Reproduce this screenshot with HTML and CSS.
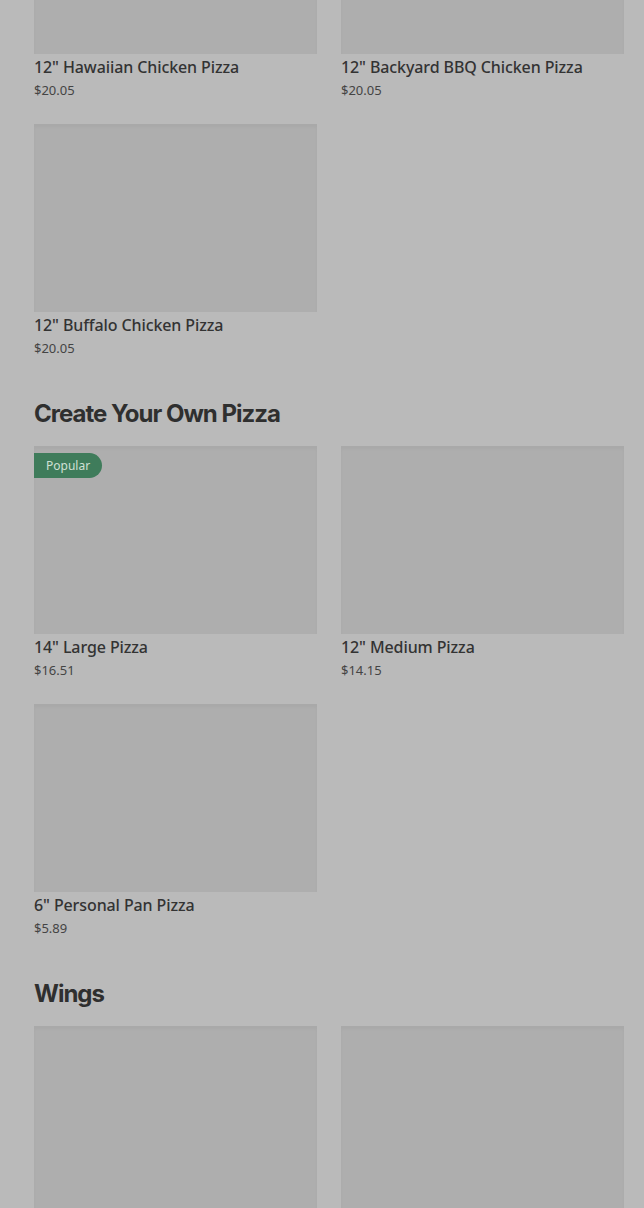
FILE: index.html
```html
<!DOCTYPE html>
<html lang="en">
<head>
    <meta charset="UTF-8">
    <meta name="viewport" content="width=device-width, initial-scale=1.0">
    <title>Menu</title>
    <link rel="stylesheet" href="styles.css">
</head>
<body>
    <main class="menu">
        <section class="menu-section">
            <div class="item-grid">
                <div class="item-card">
                    <div class="item-media"></div>
                    <div class="item-title">12" Hawaiian Chicken Pizza</div>
                    <div class="item-price">$20.05</div>
                </div>
                <div class="item-card">
                    <div class="item-media"></div>
                    <div class="item-title">12" Backyard BBQ Chicken Pizza</div>
                    <div class="item-price">$20.05</div>
                </div>
                <div class="item-card">
                    <div class="item-media"></div>
                    <div class="item-title">12" Buffalo Chicken Pizza</div>
                    <div class="item-price">$20.05</div>
                </div>
            </div>
        </section>

        <section class="menu-section">
            <h2 class="section-title">Create Your Own Pizza</h2>
            <div class="item-grid">
                <div class="item-card">
                    <div class="item-media">
                        <span class="item-badge">Popular</span>
                    </div>
                    <div class="item-title">14" Large Pizza</div>
                    <div class="item-price">$16.51</div>
                </div>
                <div class="item-card">
                    <div class="item-media"></div>
                    <div class="item-title">12" Medium Pizza</div>
                    <div class="item-price">$14.15</div>
                </div>
                <div class="item-card">
                    <div class="item-media"></div>
                    <div class="item-title">6" Personal Pan Pizza</div>
                    <div class="item-price">$5.89</div>
                </div>
            </div>
        </section>

        <section class="menu-section">
            <h2 class="section-title">Wings</h2>
            <div class="item-grid">
                <div class="item-card">
                    <div class="item-media"></div>
                </div>
                <div class="item-card">
                    <div class="item-media"></div>
                </div>
            </div>
        </section>
    </main>
</body>
</html>
```

FILE: styles.css
```css
:root {
    --page-bg: #bababa;
    --media-bg: #aeaeae;
    --text: #333333;
    --text-muted: #444444;
    --badge-bg: #3f7c5b;
    --badge-text: #cfe0d5;
}

body {
    margin: 0;
    background: var(--page-bg);
    font-family: "Noto Sans", sans-serif;
    color: var(--text);
    overflow: hidden;
}

/* page is shown scrolled part way down */
.menu {
    margin-top: -134px;
    padding: 0 20px 0 34px;
}

.menu-section + .menu-section {
    margin-top: 40px;
}

.section-title {
    margin: 0 0 16px;
    font-family: Inter, sans-serif;
    font-size: 24px;
    line-height: 32px;
    font-weight: 700;
    letter-spacing: -1px;
    color: #2f2f2f;
}

.item-grid {
    display: grid;
    grid-template-columns: repeat(2, 283px);
    column-gap: 24px;
    row-gap: 24px;
}

.item-media {
    position: relative;
    height: 188px;
    background: var(--media-bg);
    box-shadow: inset 0 3px 3px rgba(0,0,0,0.03);
}

.item-title {
    margin-top: 2px;
    font-size: 16px;
    line-height: 22px;
    font-weight: 500;
    letter-spacing: -0.1px;
}

.item-price {
    margin-top: 3px;
    font-size: 13px;
    line-height: 19px;
    color: var(--text-muted);
}

.item-badge {
    position: absolute;
    top: 7px;
    left: 0;
    padding: 0 12px;
    height: 25px;
    line-height: 25px;
    font-size: 12px;
    background: var(--badge-bg);
    color: var(--badge-text);
    border-radius: 0 13px 13px 0;
}
```
